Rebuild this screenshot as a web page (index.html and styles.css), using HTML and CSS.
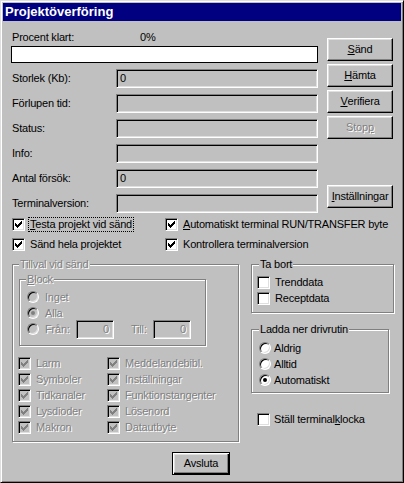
FILE: index.html
```html
<!DOCTYPE html>
<html>
<head>
<meta charset="utf-8">
<title>Projektöverföring</title>
<link rel="stylesheet" href="styles.css">
</head>
<body>
<svg class="defs" width="0" height="0" aria-hidden="true">
  <defs>
    <symbol id="chk" viewBox="0 0 7 7"><path d="M0 2h1v3H0zM1 3h1v3H1zM2 4h1v3H2zM3 3h1v3H3zM4 2h1v3H4zM5 1h1v3H5zM6 0h1v3H6z"/></symbol>
  </defs>
</svg>
<div class="window">
  <div class="titlebar">Projektöverföring</div>
  <div class="client">
    <div class="top">
      <div class="form">
        <div class="progress-head"><span class="pct-label">Procent klart:</span><span>0%</span></div>
        <div class="progress"></div>
        <div class="row"><span class="lbl">Storlek (Kb):</span><div class="field">0</div></div>
        <div class="row"><span class="lbl">Förlupen tid:</span><div class="field"></div></div>
        <div class="row"><span class="lbl">Status:</span><div class="field"></div></div>
        <div class="row"><span class="lbl">Info:</span><div class="field"></div></div>
        <div class="row"><span class="lbl">Antal försök:</span><div class="field">0</div></div>
        <div class="row"><span class="lbl">Terminalversion:</span><div class="field"></div></div>
      </div>
      <div class="buttons">
        <div class="btn"><u>S</u>änd</div>
        <div class="btn"><u>H</u>ämta</div>
        <div class="btn"><u>V</u>erifiera</div>
        <div class="btn disabled">Stop<u>p</u></div>
        <div class="btn settings"><u>I</u>nställningar</div>
      </div>
    </div>

    <div class="checks">
      <div class="chk"><span class="box"><svg><use href="#chk"/></svg></span><span class="txt focus"><u>T</u>esta projekt vid sänd</span></div>
      <div class="chk"><span class="box"><svg><use href="#chk"/></svg></span><span class="txt"><u>A</u>utomatiskt terminal RUN/TRANSFER byte</span></div>
      <div class="chk"><span class="box"><svg><use href="#chk"/></svg></span><span class="txt">Sänd hela projektet</span></div>
      <div class="chk"><span class="box"><svg><use href="#chk"/></svg></span><span class="txt">Kontrollera terminalversion</span></div>
    </div>

    <div class="lower">
      <div class="group tillval">
        <span class="legend dis">Tillval vid sänd</span>
        <div class="group block">
          <span class="legend dis"><u>B</u>lock</span>
          <div class="radio-row"><span class="radio off"></span><span class="rtxt dis">Inget</span></div>
          <div class="radio-row"><span class="radio off on"></span><span class="rtxt dis">Alla</span></div>
          <div class="radio-row"><span class="radio off"></span><span class="rtxt dis fran">Från:</span><div class="field small dis">0</div><span class="dis till">Till:</span><div class="field small dis">0</div></div>
        </div>
        <div class="opts">
          <div class="chk d"><span class="box off"><svg><use href="#chk"/></svg></span><span class="txt dis">Larm</span></div>
          <div class="chk d"><span class="box off"><svg><use href="#chk"/></svg></span><span class="txt dis">Meddelandebibl.</span></div>
          <div class="chk d"><span class="box off"><svg><use href="#chk"/></svg></span><span class="txt dis">Symboler</span></div>
          <div class="chk d"><span class="box off"><svg><use href="#chk"/></svg></span><span class="txt dis">Inställningar</span></div>
          <div class="chk d"><span class="box off"><svg><use href="#chk"/></svg></span><span class="txt dis">Tidkanaler</span></div>
          <div class="chk d"><span class="box off"><svg><use href="#chk"/></svg></span><span class="txt dis">Funktionstangenter</span></div>
          <div class="chk d"><span class="box off"><svg><use href="#chk"/></svg></span><span class="txt dis">Lysdioder</span></div>
          <div class="chk d"><span class="box off"><svg><use href="#chk"/></svg></span><span class="txt dis">Lösenord</span></div>
          <div class="chk d"><span class="box off"><svg><use href="#chk"/></svg></span><span class="txt dis">Makron</span></div>
          <div class="chk d"><span class="box off"><svg><use href="#chk"/></svg></span><span class="txt dis">Datautbyte</span></div>
        </div>
      </div>

      <div class="side">
        <div class="group tabort">
          <span class="legend">Ta bort</span>
          <div class="chk d"><span class="box empty"></span><span class="txt">Trenddata</span></div>
          <div class="chk d"><span class="box empty"></span><span class="txt">Receptdata</span></div>
        </div>
        <div class="group ladda">
          <span class="legend">Ladda ner drivrutin</span>
          <div class="radio-row"><span class="radio"></span><span class="rtxt2">Aldrig</span></div>
          <div class="radio-row"><span class="radio"></span><span class="rtxt2">Alltid</span></div>
          <div class="radio-row"><span class="radio on"></span><span class="rtxt2">Automatiskt</span></div>
        </div>
        <div class="chk d klocka"><span class="box empty"></span><span class="txt2">Ställ terminal<u>k</u>locka</span></div>
      </div>
    </div>

    <div class="footer"><div class="btn default">Avsluta</div></div>
  </div>
</div>
</body>
</html>
```

FILE: styles.css
```css
* { box-sizing: border-box; }
html, body { margin: 0; padding: 0; }
body {
  background: #c0c0c0;
  font-family: "Liberation Sans", Arial, sans-serif;
  font-size: 11px;
  line-height: 13px;
  letter-spacing: -0.2px;
  color: #000;
}
.defs { position: absolute; width: 0; height: 0; overflow: hidden; }
u { text-decoration: underline; text-underline-offset: 1px; }

.window {
  width: 404px;
  height: 483px;
  border: 1px solid;
  border-color: #dfdfdf #000 #000 #dfdfdf;
  box-shadow: inset 1px 1px #fff, inset -1px -1px #808080;
  padding: 2px;
  display: flex;
  flex-direction: column;
}
.titlebar {
  height: 18px;
  background: #000080;
  color: #fff;
  font-weight: bold;
  font-size: 13px;
  letter-spacing: 0;
  line-height: 18px;
  padding-left: 2px;
}
.client { flex: 1; display: flex; flex-direction: column; }

/* top area */
.top { display: flex; padding-left: 8px; }
.form { width: 307px; padding-top: 10px; }
.progress-head { display: flex; height: 13px; padding-left: 1px; }
.pct-label { width: 128px; }
.progress {
  margin-top: 2px;
  margin-bottom: 1px;
  height: 17px;
  width: 307px;
  background: #fff;
  border: 1px solid #000;
}
.row { display: flex; align-items: center; height: 19px; margin-top: 6px; }
.lbl { width: 105px; padding-left: 1px; }
.field {
  width: 202px;
  height: 19px;
  border: 1px solid;
  border-color: #808080 #fff #fff #808080;
  box-shadow: inset 1px 1px #000, inset -1px -1px #dfdfdf;
  padding-left: 3px;
  line-height: 17px;
  background: #c0c0c0;
}
.field.small { width: 38px; text-align: right; padding: 0 4px 0 0; }

.buttons { margin-left: 9px; width: 66px; padding-top: 17px; display: flex; flex-direction: column; }
.btn {
  width: 66px;
  height: 23px;
  border: 1px solid;
  border-color: #fff #000 #000 #fff;
  box-shadow: inset -1px -1px #808080, inset 1px 1px #dfdfdf;
  display: flex;
  align-items: center;
  justify-content: center;
  margin-top: 3px;
}
.btn:first-child { margin-top: 0; }
.btn.settings { margin-top: 46px; }
.btn.disabled { color: #808080; text-shadow: 1px 1px 0 #fff; }
.btn.default {
  width: 58px;
  margin-top: 0;
  border: 1px solid #000;
  box-shadow: inset 1px 1px #fff, inset -1px -1px #000, inset -2px -2px #808080, inset 2px 2px #dfdfdf;
}

/* checkboxes */
.checks {
  display: grid;
  grid-template-columns: 153px auto;
  grid-auto-rows: 20px;
  padding-left: 9px;
  margin-top: 1px;
}
.chk { display: flex; align-items: center; gap: 4px; }
.chk.d { height: 16px; }
.box {
  width: 13px;
  height: 13px;
  flex: none;
  border: 1px solid;
  border-color: #808080 #fff #fff #808080;
  box-shadow: inset 1px 1px #000, inset -1px -1px #dfdfdf;
  background: #fff;
  display: flex;
  align-items: center;
  justify-content: center;
}
.box svg { width: 7px; height: 7px; display: block; fill: #000; }
.box.off { background: #c0c0c0; }
.box.off svg { fill: #808080; }
.txt { padding: 0 1px; white-space: nowrap; }
.txt2 { padding-left: 0; white-space: nowrap; }
.focus { outline: 1px dotted #000; outline-offset: 0; }
.dis { color: #808080; text-shadow: 1px 1px 0 #fff; }

/* group boxes */
.lower { display: flex; align-items: flex-start; margin-top: 10px; }
.group {
  position: relative;
  border: 1px solid #808080;
  box-shadow: inset 1px 1px #fff, 1px 1px #fff;
}
.legend {
  position: absolute;
  top: -7px;
  left: 6px;
  padding: 0 1px;
  background: #c0c0c0;
  line-height: 13px;
  white-space: nowrap;
}
.tillval { margin-left: 9px; width: 227px; height: 178px; padding-top: 14px; padding-left: 6px; }
.block { width: 187px; height: 67px; padding: 9px 0 0 7px; }
.block .legend { left: 6px; }
.radio-row { display: flex; align-items: center; height: 16px; }
.radio {
  width: 12px;
  height: 12px;
  flex: none;
  border-radius: 50%;
  border: 1px solid;
  border-color: #808080 #fff #fff #808080;
  box-shadow: inset 1px 1px #000, inset -1px -1px #dfdfdf;
  background: #fff;
  display: flex;
  align-items: center;
  justify-content: center;
}
.radio.off { background: #c0c0c0; }
.radio.on::after {
  content: "";
  width: 4px;
  height: 4px;
  border-radius: 50%;
  background: #000;
}
.radio.off.on::after { background: #808080; }
.rtxt { margin-left: 6px; }
.rtxt2 { margin-left: 3px; }
.fran { width: 31px; }
.till { margin-left: 17px; width: 22px; }
.opts {
  display: grid;
  grid-template-columns: 89px auto;
  grid-auto-rows: 16px;
  margin-top: 9px;
  margin-left: -1px;
}

.side { margin-left: 12px; display: flex; flex-direction: column; }
.tabort { width: 143px; height: 49px; padding: 9px 0 0 5px; }
.tabort .legend { left: 7px; }
.ladda { width: 138px; height: 64px; margin-top: 16px; padding: 10px 0 0 7px; }
.ladda .legend { left: 7px; }
.klocka { margin-top: 18px; padding-left: 6px; }

.footer { display: flex; justify-content: center; margin-top: 10px; padding-right: 2px; }
```
